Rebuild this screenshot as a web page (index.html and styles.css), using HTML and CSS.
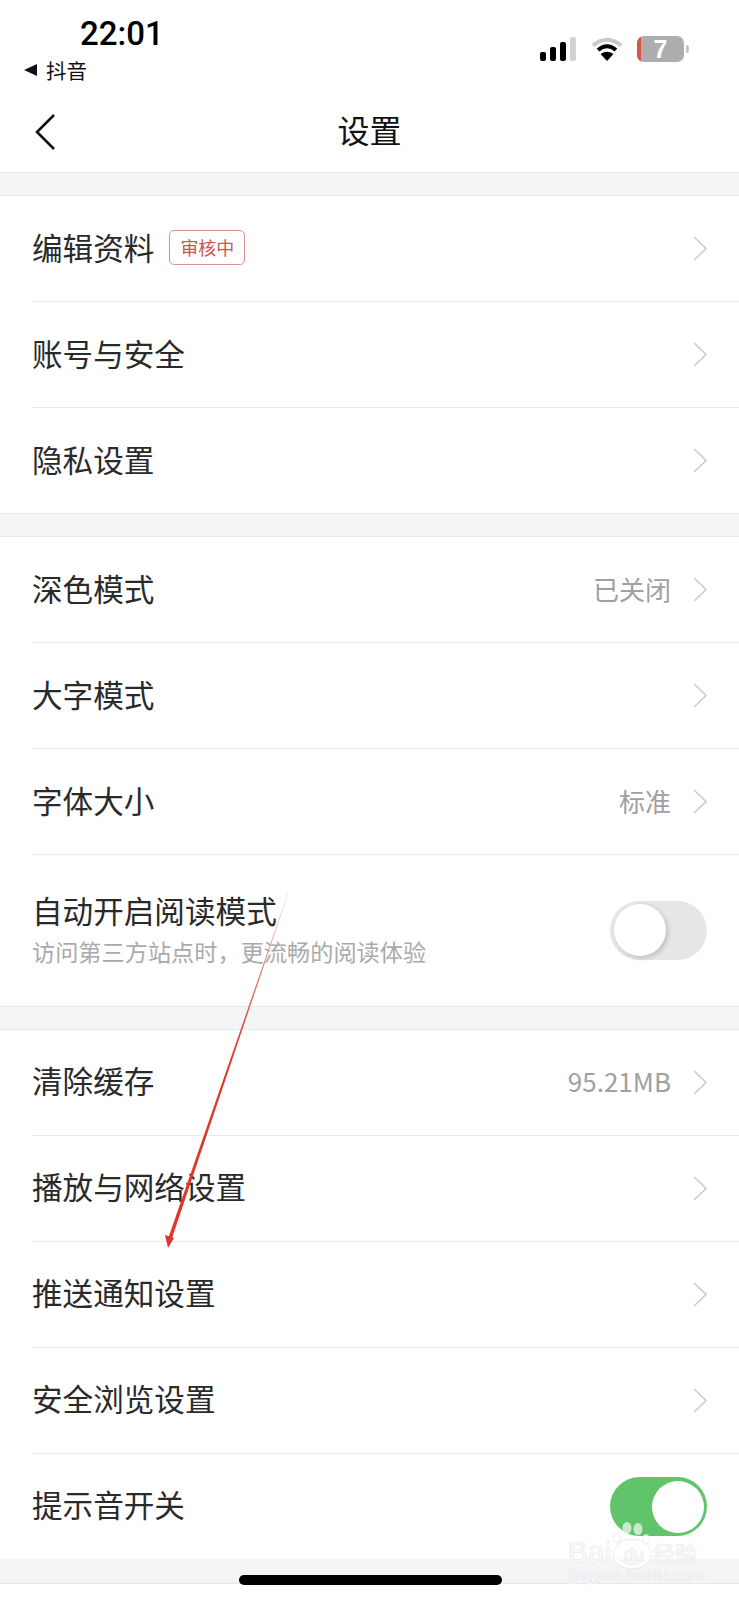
FILE: index.html
```html
<!DOCTYPE html>
<html lang="zh-CN">
<head>
    <meta charset="UTF-8">
    <meta name="viewport" content="width=device-width, initial-scale=1.0">
    <title>设置</title>
    <link rel="stylesheet" href="styles.css">
</head>
<body>
<div class="page">
    <!-- STATUS BAR -->
    <div class="status">
        <div class="status-left">
            <div class="time">22:01</div>
            <div class="back-app"><span class="tri"></span>抖音</div>
        </div>
        <div class="status-right">
            <svg class="signal" width="36" height="24" viewBox="0 0 36 24">
                <rect x="0" y="15" width="6" height="9" rx="2" fill="#000"/>
                <rect x="10" y="10" width="6" height="14" rx="2" fill="#000"/>
                <rect x="20" y="5" width="6" height="19" rx="2" fill="#000"/>
                <rect x="30" y="0" width="6" height="24" rx="2" fill="#d2d2d2"/>
            </svg>
            <svg class="wifi" width="32" height="24" viewBox="0 0 32 24">
                <path d="M2 8.5 Q16 -3 30 8.5" fill="none" stroke="#c8c8c8" stroke-width="4"/>
                <path d="M7 13 Q16 5.5 25 13" fill="none" stroke="#000" stroke-width="4"/>
                <path d="M16 24 L9.5 17 Q16 12.5 22.5 17 Z" fill="#000"/>
            </svg>
            <div class="battery"><span class="battery-low"></span>7</div>
            <span class="battery-nub"></span>
        </div>
    </div>

    <!-- NAV -->
    <div class="nav">
        <svg class="nav-back" width="20" height="36" viewBox="0 0 20 36">
            <path d="M19 1 L2 18 L19 35" fill="none" stroke="#111" stroke-width="2.6"/>
        </svg>
        <div class="nav-title">设置</div>
    </div>

    <div class="gap"></div>
    <div class="group">
        <div class="row">
            <span class="label">编辑资料</span><span class="badge">审核中</span>
            <span class="value"></span>
            <svg class="chev" width="14" height="25" viewBox="0 0 14 25"><path d="M1 1 L13 12.5 L1 24" fill="none" stroke="#ccc" stroke-width="1.6"/></svg>
        </div>
        <div class="row">
            <span class="label">账号与安全</span>
            <span class="value"></span>
            <svg class="chev" width="14" height="25" viewBox="0 0 14 25"><path d="M1 1 L13 12.5 L1 24" fill="none" stroke="#ccc" stroke-width="1.6"/></svg>
        </div>
        <div class="row">
            <span class="label">隐私设置</span>
            <span class="value"></span>
            <svg class="chev" width="14" height="25" viewBox="0 0 14 25"><path d="M1 1 L13 12.5 L1 24" fill="none" stroke="#ccc" stroke-width="1.6"/></svg>
        </div>
    </div>

    <div class="gap"></div>
    <div class="group">
        <div class="row">
            <span class="label">深色模式</span>
            <span class="value">已关闭</span>
            <svg class="chev" width="14" height="25" viewBox="0 0 14 25"><path d="M1 1 L13 12.5 L1 24" fill="none" stroke="#ccc" stroke-width="1.6"/></svg>
        </div>
        <div class="row">
            <span class="label">大字模式</span>
            <span class="value"></span>
            <svg class="chev" width="14" height="25" viewBox="0 0 14 25"><path d="M1 1 L13 12.5 L1 24" fill="none" stroke="#ccc" stroke-width="1.6"/></svg>
        </div>
        <div class="row">
            <span class="label">字体大小</span>
            <span class="value">标准</span>
            <svg class="chev" width="14" height="25" viewBox="0 0 14 25"><path d="M1 1 L13 12.5 L1 24" fill="none" stroke="#ccc" stroke-width="1.6"/></svg>
        </div>
        <div class="row row-tall">
            <div class="row-text">
                <div class="label">自动开启阅读模式</div>
                <div class="sub">访问第三方站点时，更流畅的阅读体验</div>
            </div>
            <div class="switch"><span class="knob"></span></div>
        </div>
    </div>

    <div class="gap"></div>
    <div class="group">
        <div class="row">
            <span class="label">清除缓存</span>
            <span class="value">95.21MB</span>
            <svg class="chev" width="14" height="25" viewBox="0 0 14 25"><path d="M1 1 L13 12.5 L1 24" fill="none" stroke="#ccc" stroke-width="1.6"/></svg>
        </div>
        <div class="row">
            <span class="label">播放与网络设置</span>
            <span class="value"></span>
            <svg class="chev" width="14" height="25" viewBox="0 0 14 25"><path d="M1 1 L13 12.5 L1 24" fill="none" stroke="#ccc" stroke-width="1.6"/></svg>
        </div>
        <div class="row">
            <span class="label">推送通知设置</span>
            <span class="value"></span>
            <svg class="chev" width="14" height="25" viewBox="0 0 14 25"><path d="M1 1 L13 12.5 L1 24" fill="none" stroke="#ccc" stroke-width="1.6"/></svg>
        </div>
        <div class="row">
            <span class="label">安全浏览设置</span>
            <span class="value"></span>
            <svg class="chev" width="14" height="25" viewBox="0 0 14 25"><path d="M1 1 L13 12.5 L1 24" fill="none" stroke="#ccc" stroke-width="1.6"/></svg>
        </div>
        <div class="row">
            <span class="label">提示音开关</span>
            <div class="switch switch-on"><span class="knob"></span></div>
        </div>
    </div>
    <div class="gap gap-end"></div>

    <!-- red annotation arrow drawn over the shot -->
    <svg class="arrow" width="739" height="1600" viewBox="0 0 739 1600">
        <defs>
            <linearGradient id="arrowFade" gradientUnits="userSpaceOnUse" x1="0" y1="893" x2="0" y2="1060">
                <stop offset="0" stop-color="#efd2cd"/>
                <stop offset="0.45" stop-color="#dc7468"/>
                <stop offset="1" stop-color="#e0352b"/>
            </linearGradient>
        </defs>
        <path d="M288 893 L288.4 893 L171 1241 L167.6 1240 Z" fill="url(#arrowFade)"/>
        <path d="M168 1248 L165 1235 L174 1238 Z" fill="#e0352b"/>
    </svg>

    <!-- watermark -->
    <div class="mark">
        <svg class="paw" width="44" height="60" viewBox="0 0 44 60">
            <ellipse cx="16" cy="7" rx="4.5" ry="6" fill="#fff" fill-opacity="0.65"/>
            <ellipse cx="27" cy="8" rx="4.5" ry="6" fill="#fff" fill-opacity="0.65"/>
            <ellipse cx="6" cy="17" rx="3.5" ry="4.5" fill="#fff" fill-opacity="0.7" stroke="#ddd" stroke-width="0.6"/>
            <ellipse cx="35" cy="18" rx="3.5" ry="4.5" fill="#fff" fill-opacity="0.7" stroke="#ddd" stroke-width="0.6"/>
            <ellipse cx="21" cy="33" rx="17" ry="13" fill="none" stroke="#fff" stroke-width="3"/>
            <ellipse cx="21" cy="33" rx="19" ry="15" fill="none" stroke="#e4e4e4" stroke-width="0.7"/>
        </svg>
        <span class="mark-bai">Bai</span>
        <span class="mark-du">du</span>
        <span class="mark-cn">经验</span>
        <div class="mark-url">jingyan.baidu.com</div>
    </div>

    <div class="home-bar"></div>
</div>
</body>
</html>
```

FILE: styles.css
```css
body {
    margin: 0;
    background-color: #fff;
    font-family: "Noto Sans CJK SC", "Liberation Sans", sans-serif;
    color: #222;
}
.page {
    position: relative;
    width: 739px;
    height: 1600px;
    overflow: hidden;
    background-color: #fff;
}

/* status bar */
.status {
    height: 90px;
    display: flex;
    justify-content: space-between;
    align-items: flex-start;
}
.status-left {
    padding: 14px 0 0 24px;
}
.time {
    font-family: Roboto, "Liberation Sans", sans-serif;
    font-size: 33px;
    font-weight: 500;
    line-height: 40px;
    color: #000;
    padding-left: 56px;
}
.back-app {
    display: flex;
    align-items: center;
    font-size: 20.5px;
    line-height: 32px;
    color: #111;
}
.tri {
    width: 0;
    height: 0;
    border-style: solid;
    border-width: 6.5px 13px 6.5px 0;
    border-color: transparent #111 transparent transparent;
    margin-right: 9px;
}
.status-right {
    display: flex;
    align-items: center;
    padding: 36px 50px 0 0;
}
.wifi {
    margin-left: 15px;
}
.battery {
    position: relative;
    width: 47px;
    height: 26px;
    margin-left: 14px;
    background-color: #adadad;
    border-radius: 7px;
    overflow: hidden;
    color: #fff;
    font-family: "Liberation Sans", sans-serif;
    font-size: 25px;
    font-weight: bold;
    line-height: 26px;
    text-align: center;
}
.battery-low {
    position: absolute;
    left: 0;
    top: 0;
    width: 4px;
    height: 26px;
    background-color: #d5574c;
}
.battery-nub {
    width: 3px;
    height: 8px;
    margin-left: 2px;
    background-color: #c4c4c4;
    border-radius: 0 3px 3px 0;
}

/* nav */
.nav {
    position: relative;
    height: 82px;
    display: flex;
    align-items: center;
    justify-content: center;
}
.nav-back {
    position: absolute;
    left: 35px;
    top: 24px;
}
.nav-title {
    font-size: 32px;
    color: #111;
    line-height: 82px;
    margin-top: -5px;
}

/* groups */
.gap {
    height: 22px;
    background-color: #f4f5f7;
    border-top: 1px solid #e8e8e8;
    border-bottom: 1px solid #e8e8e8;
}
.gap-end {
    height: 24px;
    border-top: none;
}
.row {
    height: 106px;
    margin-left: 32px;
    padding-right: 32px;
    display: flex;
    align-items: center;
    border-bottom: 1px solid #ebebeb;
    box-sizing: border-box;
}
.group .row:last-child {
    height: 105px;
    border-bottom: none;
}
.group .row-tall:last-child {
    height: 150.5px;
}
.label {
    font-size: 30.6px;
    line-height: 40px;
    color: #2a2a2a;
    margin-top: -4px;
}
.row-text {
    flex: 1;
}
.sub {
    font-size: 23.2px;
    line-height: 32px;
    margin-top: 5px;
    color: #aaa;
}
.badge {
    margin-left: 15px;
    width: 76px;
    height: 35px;
    margin-top: -3px;
    box-sizing: border-box;
    border: 1px solid #dc9289;
    border-radius: 5px;
    color: #c8574d;
    font-size: 18px;
    line-height: 33px;
    text-align: center;
}
.value {
    flex: 1;
    text-align: right;
    font-size: 26px;
    color: #a0a0a0;
    margin-right: 22px;
    margin-top: -3px;
}
.chev {
    flex: none;
}

/* switches */
.switch {
    position: relative;
    flex: none;
    width: 97px;
    height: 59px;
    border-radius: 30px;
    background-color: #e6e6e6;
}
.switch .knob {
    position: absolute;
    left: 4px;
    top: 3px;
    width: 52px;
    height: 52px;
    border-radius: 50%;
    background-color: #fff;
    box-shadow: 2px 2px 5px rgba(0, 0, 0, 0.18);
}
.row .switch-on {
    margin-left: auto;
    background-color: #62c46a;
}
.switch-on .knob {
    left: 42px;
    top: 4px;
    box-shadow: none;
}

/* overlays */
.arrow {
    position: absolute;
    left: 0;
    top: 0;
    pointer-events: none;
}
.mark {
    position: absolute;
    left: 566px;
    top: 1520px;
    width: 136px;
    height: 70px;
    font-family: "Liberation Sans", sans-serif;
    color: rgba(255, 255, 255, 0.9);
    text-shadow: 0 0 1px #c4c4c4;
    white-space: nowrap;
}
.paw {
    position: absolute;
    left: 45px;
    top: 1px;
}
.mark-bai {
    position: absolute;
    left: 2px;
    top: 15px;
    font-size: 30px;
    line-height: 34px;
}
.mark-du {
    position: absolute;
    left: 58px;
    top: 24px;
    font-size: 18px;
    line-height: 20px;
}
.mark-cn {
    position: absolute;
    left: 87px;
    top: 17px;
    font-family: "Noto Sans CJK SC", sans-serif;
    font-size: 22px;
    line-height: 30px;
}
.mark-url {
    position: absolute;
    left: 2px;
    top: 46px;
    font-size: 17px;
    line-height: 20px;
}
.home-bar {
    position: absolute;
    left: 239px;
    top: 1575px;
    width: 263px;
    height: 10px;
    border-radius: 5px;
    background-color: #000;
}
```
